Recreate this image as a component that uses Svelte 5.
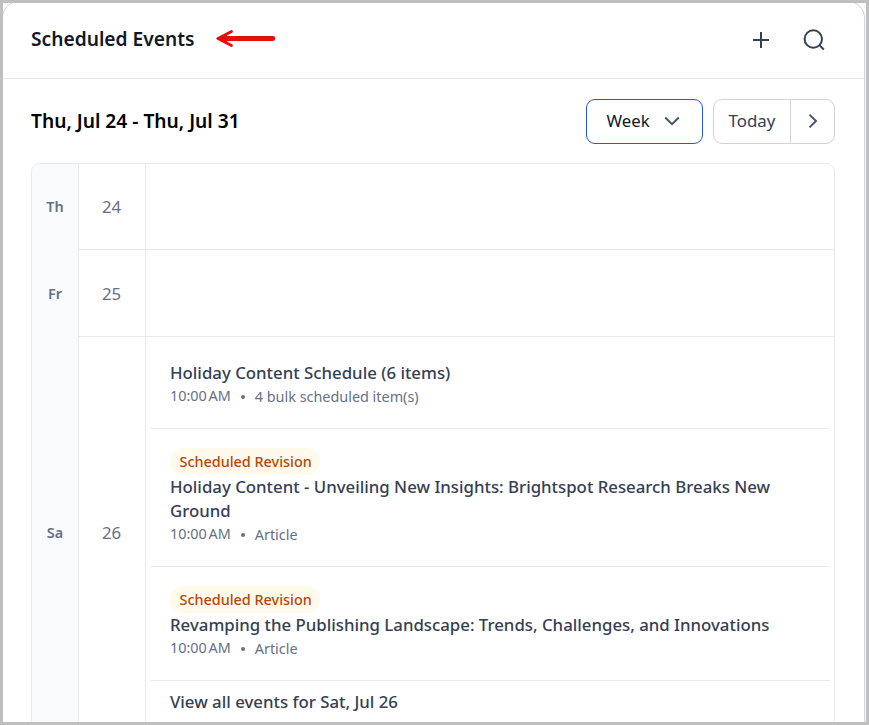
<script lang="ts">
	interface ScheduledEvent {
		title: string
		time: string
		detail: string
		badge?: string
	}

	interface Day {
		weekday: string
		date: number
		events: ScheduledEvent[]
		viewAll?: string
	}

	const days: Day[] = [
		{ weekday: 'Th', date: 24, events: [] },
		{ weekday: 'Fr', date: 25, events: [] },
		{
			weekday: 'Sa',
			date: 26,
			events: [
				{
					title: 'Holiday Content Schedule (6 items)',
					time: '10:00 AM',
					detail: '4 bulk scheduled item(s)'
				},
				{
					title: 'Holiday Content - Unveiling New Insights: Brightspot Research Breaks New Ground',
					time: '10:00 AM',
					detail: 'Article',
					badge: 'Scheduled Revision'
				},
				{
					title: 'Revamping the Publishing Landscape: Trends, Challenges, and Innovations',
					time: '10:00 AM',
					detail: 'Article',
					badge: 'Scheduled Revision'
				}
			],
			viewAll: 'View all events for Sat, Jul 26'
		}
	]
</script>

<div class="frame">
	<section class="card">
		<header class="header">
			<h1 class="heading">Scheduled Events</h1>
			<svg class="arrow" width="62" height="20" viewBox="0 0 62 20">
				<path d="M57.8 10.5H10" stroke-width="4.8" />
				<path d="M16.5 3.4L3 10.5L16.5 17.6" stroke-width="2.8" />
				<path class="tip" d="M1 10.5L12 5.6V15.4Z" />
			</svg>
			<div class="actions">
				<button class="icon" aria-label="Add">
					<svg width="24" height="24" viewBox="0 0 24 24"><path d="M12 4V20M4 12H20" /></svg>
				</button>
				<button class="icon" aria-label="Search">
					<svg width="24" height="24" viewBox="0 0 24 24">
						<circle cx="11.3" cy="11" r="8.7" />
						<path d="M17.4 17.1L21.8 21.5" />
					</svg>
				</button>
			</div>
		</header>

		<div class="toolbar">
			<h2 class="range">Thu, Jul 24 - Thu, Jul 31</h2>
			<button class="select">
				<span class="value">Week</span>
				<svg width="16" height="10" viewBox="0 0 16 10"><path d="M1.2 1.5L8 8.2L14.8 1.5" /></svg>
			</button>
			<div class="group">
				<button class="today">Today</button>
				<button class="next" aria-label="Next">
					<svg width="10" height="16" viewBox="0 0 10 16"><path d="M1.5 1.6L8 8L1.5 14.4" /></svg>
				</button>
			</div>
		</div>

		<div class="calendar">
			{#each days as day}
				<div class="day" class:filled={day.events.length > 0}>
					<div class="weekday">{day.weekday}</div>
					<div class="date">{day.date}</div>
					<div class="events">
						{#each day.events as event}
							<article class="event" class:tagged={event.badge}>
								{#if event.badge}
									<span class="badge">{event.badge}</span>
								{/if}
								<h3 class="title">{event.title}</h3>
								<div class="meta">
									<span class="time">{event.time}</span>
									<span class="dot"></span>
									<span class="detail">{event.detail}</span>
								</div>
							</article>
						{/each}
						{#if day.viewAll}
							<div class="view-all">{day.viewAll}</div>
						{/if}
					</div>
				</div>
			{/each}
		</div>
	</section>
</div>

<style>
	:global(body) {
		margin: 0;
	}
	.frame {
		box-sizing: border-box;
		width: 869px;
		height: 725px;
		border: 3px solid #bfbfbf;
		background: #f8fafc;
		overflow: hidden;
		font-family: 'Noto Sans', sans-serif;
		font-size: 16px;
		color: #344054;
	}
	.card {
		box-sizing: border-box;
		width: 863px;
		height: 760px;
		margin: -2px 0 0 -1px;
		border: 1px solid #cbd5e1;
		border-radius: 17px;
		background: #fff;
	}
	h1,
	h2,
	h3 {
		margin: 0;
	}
	button {
		margin: 0;
		padding: 0;
		border: 0;
		background: none;
		font: inherit;
		color: inherit;
	}
	svg {
		display: block;
		flex: none;
		fill: none;
		stroke: #344054;
		stroke-width: 2;
	}
	.header {
		box-sizing: border-box;
		display: flex;
		align-items: center;
		height: 77px;
		padding: 0 38px 0 28px;
		border-bottom: 1px solid #e9eaec;
	}
	.heading {
		padding-bottom: 2px;
		font-size: 19.2px;
		line-height: 28px;
		font-weight: 600;
		color: #101828;
	}
	.arrow {
		margin-left: 21px;
		padding-bottom: 4px;
		stroke: #e80c0c;
		stroke-linecap: round;
		stroke-linejoin: round;
	}
	.tip {
		fill: #e80c0c;
		stroke: none;
	}
	.actions {
		display: flex;
		gap: 29px;
		margin-left: auto;
	}
	.toolbar {
		display: flex;
		align-items: center;
		padding: 20px 29px 19px 28px;
	}
	.range {
		margin-right: auto;
		padding-bottom: 2px;
		font-size: 19.2px;
		line-height: 28px;
		font-weight: 600;
		color: #000;
	}
	.select {
		box-sizing: border-box;
		display: flex;
		align-items: center;
		gap: 14px;
		width: 117px;
		height: 45px;
		margin-right: 10px;
		padding: 0 0 1px 19.5px;
		border: 1px solid #2158e0;
		border-radius: 9px;
		font-size: 16.8px;
		color: #101828;
	}
	.value {
		padding-bottom: 2px;
	}
	.select svg,
	.next svg {
		stroke: #475467;
	}
	.group {
		box-sizing: border-box;
		display: flex;
		width: 122px;
		height: 45px;
		border: 1px solid #d0d3dd;
		border-radius: 9px;
		font-size: 16.9px;
	}
	.today {
		width: 76px;
		padding-bottom: 2px;
	}
	.next {
		display: flex;
		flex: 1;
		align-items: center;
		justify-content: center;
		padding-bottom: 1px;
		border-left: 1px solid #d0d3dd;
	}
	.calendar {
		margin: 0 29px 0 28px;
		border: 1px solid #e9eaec;
		border-radius: 9px;
		overflow: hidden;
	}
	.day {
		display: flex;
		height: 86px;
		color: #667085;
	}
	.day + .day {
		height: 87px;
	}
	.day.filled {
		height: 392px;
	}
	.weekday,
	.date {
		box-sizing: border-box;
		display: flex;
		flex: none;
		align-items: center;
		justify-content: center;
		border-right: 1px solid #e9eaec;
	}
	.weekday {
		width: 47px;
		padding-bottom: 1px;
		background: #f8fafc;
		font-size: 14.4px;
		font-weight: 600;
	}
	.date {
		width: 67px;
		padding-right: 1px;
		font-size: 16.8px;
	}
	.events {
		flex: 1;
	}
	.date,
	.events {
		border-bottom: 1px solid #e9eaec;
	}
	.event {
		margin: 0 4px 0 5px;
		padding: 24px 19px 19px;
		border-bottom: 1px solid #e9eaec;
	}
	.tagged {
		padding-top: 19px;
	}
	.badge {
		display: block;
		box-sizing: border-box;
		width: fit-content;
		height: 27px;
		padding: 0 8.5px 0 9.5px;
		border-radius: 14px;
		background: #fffaeb;
		font-size: 14.4px;
		font-weight: 500;
		line-height: 27px;
		color: #b54708;
	}
	.title {
		font-size: 16.81px;
		font-weight: 500;
		line-height: 24px;
		color: #344054;
	}
	.meta {
		display: flex;
		align-items: center;
		height: 24px;
		font-size: 14.4px;
	}
	.time {
		padding-bottom: 3px;
		word-spacing: -2px;
	}
	.detail {
		padding-bottom: 2px;
	}
	.dot {
		width: 4px;
		height: 4px;
		margin: 0 10px;
		border-radius: 50%;
		background: #667085;
	}
	.view-all {
		padding: 9px 24px;
		font-size: 16.81px;
		font-weight: 500;
		line-height: 24px;
		color: #344054;
	}
</style>
